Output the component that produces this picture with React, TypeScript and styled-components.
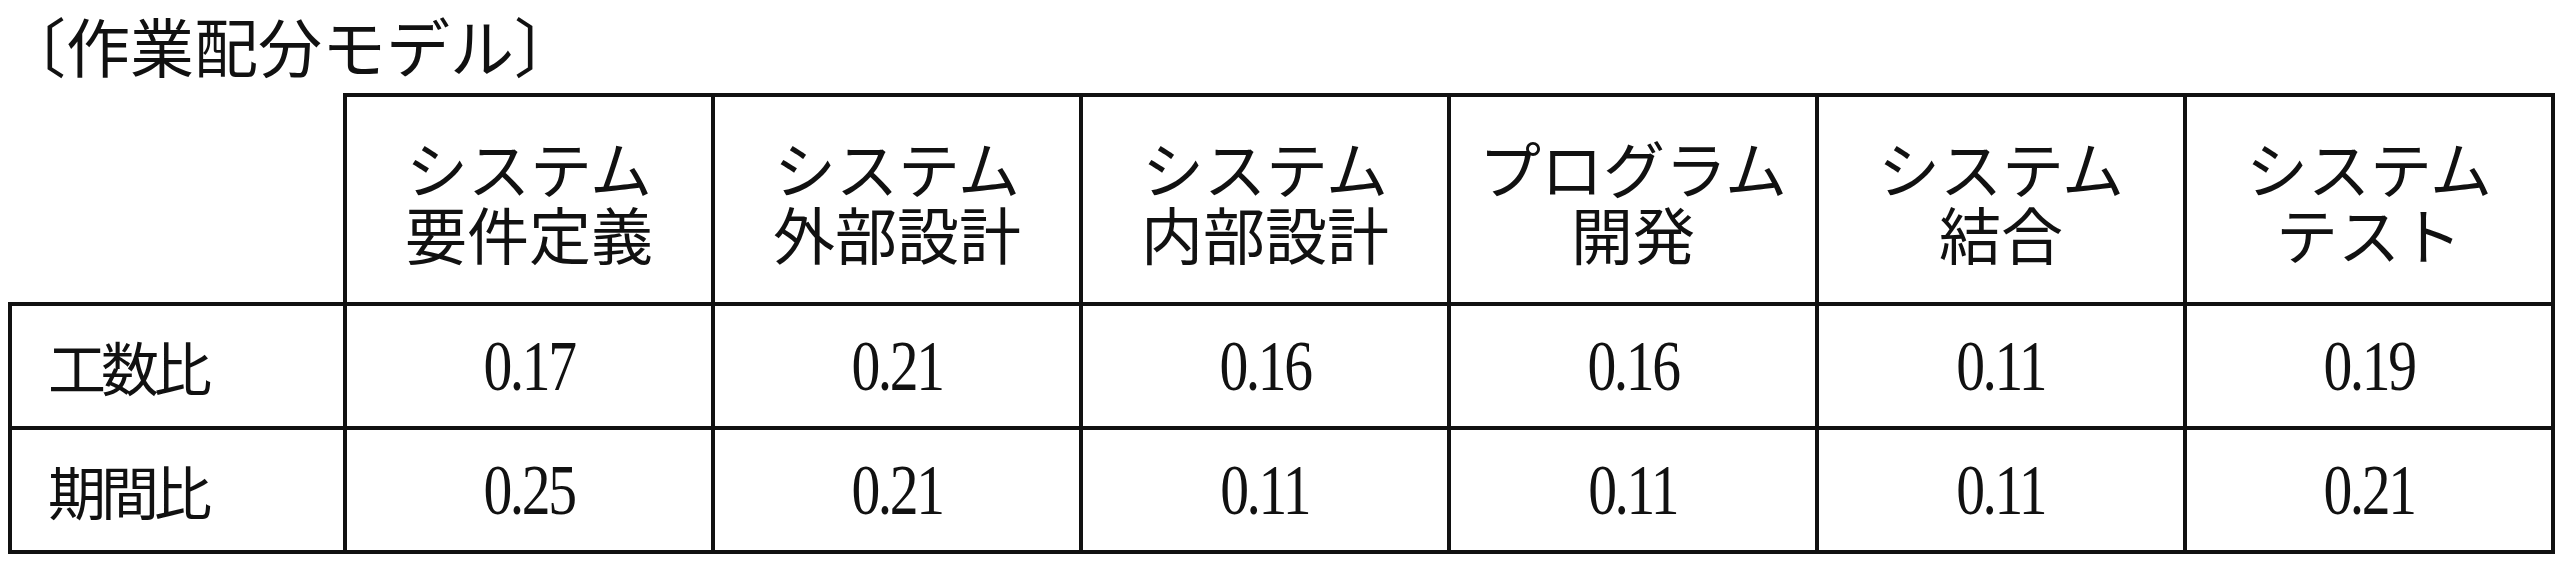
import React from 'react';
import styled, { createGlobalStyle } from 'styled-components';

const GlobalStyle = createGlobalStyle`
    html, body {
        margin: 0;
        background: #ffffff;
    }
    body {
        padding: 8px;
        font-family: "Noto Sans CJK JP", "Noto Sans", sans-serif;
        color: #111111;
    }
`;

const Title = styled.div`
    font-size: 64px;
    line-height: 72px;
    margin: 0 0 0 -6px;
    letter-spacing: 0px;
`;

const Table = styled.table`
    margin-top: 13px;
    border-collapse: collapse;
    table-layout: fixed;
    width: 2543px;
`;

const HeadCell = styled.th<{ $empty?: boolean }>`
    height: 205px;
    padding: 0;
    border: ${(p) => (p.$empty ? 'none' : '4px solid #111111')};
    font-weight: 400;
    font-size: 62px;
    line-height: 66px;
    text-align: center;
    vertical-align: middle;
`;

const LabelCell = styled.td`
    height: 120px;
    padding: 0 0 0 36px;
    border: 4px solid #111111;
    font-size: 58px;
    line-height: 66px;
    letter-spacing: -5px;
    text-align: left;
    vertical-align: middle;
`;

const ValueCell = styled.td`
    height: 120px;
    padding: 0;
    border: 4px solid #111111;
    text-align: center;
    vertical-align: middle;
`;

const Number = styled.span`
    display: inline-block;
    font-family: "Liberation Serif", serif;
    font-size: 72px;
    line-height: 66px;
    letter-spacing: -3px;
    transform: scaleX(0.8);
`;

const phases = [
    ['システム', '要件定義'],
    ['システム', '外部設計'],
    ['システム', '内部設計'],
    ['プログラム', '開発'],
    ['システム', '結合'],
    ['システム', 'テスト'],
];

const rows = [
    { label: '工数比', values: ['0.17', '0.21', '0.16', '0.16', '0.11', '0.19'] },
    { label: '期間比', values: ['0.25', '0.21', '0.11', '0.11', '0.11', '0.21'] },
];

const App = (): JSX.Element => {
    return (
        <>
            <GlobalStyle />
            <Title>〔作業配分モデル〕</Title>
            <Table>
                <colgroup>
                    <col style={{ width: 335 }} />
                    {phases.map((_, i) => (
                        <col key={i} style={{ width: 368 }} />
                    ))}
                </colgroup>
                <thead>
                    <tr>
                        <HeadCell $empty />
                        {phases.map((p, i) => (
                            <HeadCell key={i}>
                                {p[0]}
                                <br />
                                {p[1]}
                            </HeadCell>
                        ))}
                    </tr>
                </thead>
                <tbody>
                    {rows.map((r) => (
                        <tr key={r.label}>
                            <LabelCell>{r.label}</LabelCell>
                            {r.values.map((v, i) => (
                                <ValueCell key={i}>
                                    <Number>{v}</Number>
                                </ValueCell>
                            ))}
                        </tr>
                    ))}
                </tbody>
            </Table>
        </>
    );
};

export default App;
